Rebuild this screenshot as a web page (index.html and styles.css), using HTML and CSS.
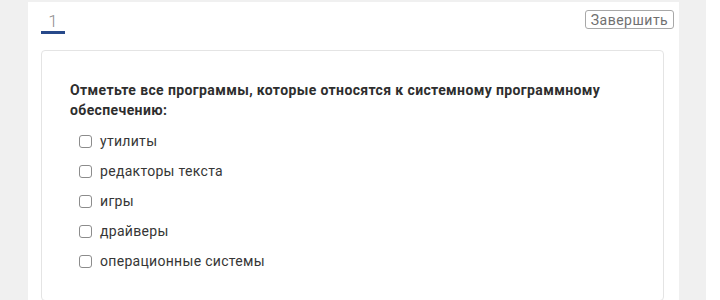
FILE: index.html
```html
<!DOCTYPE html>
<html lang="ru">
<head>
    <meta charset="UTF-8">
    <meta name="viewport" content="width=device-width, initial-scale=1.0">
    <title>Тест</title>
    <link rel="stylesheet" href="styles.css">
</head>
<body>
<div class="screen">
    <div class="main">
        <div class="sheet">
            <div class="top">
                <span class="tab active">1</span>
                <button class="finish" type="button">Завершить</button>
            </div>

            <div class="card">
                <div class="question">Отметьте все программы, которые относятся к системному программному обеспечению:</div>
                <ul class="answers">
                    <li><label><input class="box" type="checkbox"> утилиты</label></li>
                    <li><label><input class="box" type="checkbox"> редакторы текста</label></li>
                    <li><label><input class="box" type="checkbox"> игры</label></li>
                    <li><label><input class="box" type="checkbox"> драйверы</label></li>
                    <li><label><input class="box" type="checkbox"> операционные системы</label></li>
                </ul>
            </div>
        </div>
    </div>
    <div class="side"></div>
</div>
</body>
</html>
```

FILE: styles.css
```css
*{
    margin: 0;
    padding: 0;
    box-sizing: border-box;
}

body{
    font-family: Roboto, "Liberation Sans", Arial, sans-serif;
    background-color: #ffffff;
    color: #333333;
}

.screen{
    display: flex;
    height: 300px;
    overflow: hidden;
}

.main{
    width: 706px;
    padding: 2px 27px 0 28px;
    background-color: #f0f0f0;
}

.side{
    flex: 1;
    background-color: #ffffff;
}

.sheet{
    background-color: #ffffff;
    height: 100%;
    padding: 0 5px 0 13px;
}

.top{
    height: 48px;
    display: flex;
    justify-content: space-between;
    align-items: flex-start;
}

.tab{
    display: inline-block;
    width: 24px;
    margin-top: 9px;
    text-align: center;
    font-size: 17px;
    font-weight: 300;
    line-height: 20px;
    color: #8f8f8f;
    border-bottom: 3px solid transparent;
}

.tab.active{
    border-bottom-color: #27498a;
}

.finish{
    margin-top: 8px;
    height: 19px;
    width: 89px;
    padding: 0;
    font-family: inherit;
    font-size: 14px;
    letter-spacing: 0.5px;
    color: #707070;
    background-color: #ffffff;
    border: 1px solid #a8a8a8;
    border-radius: 3px;
}

.card{
    margin-right: 10px;
    border: 1px solid #e4e4e4;
    border-radius: 4px;
    padding: 29px 20px 24px 28px;
}

.question{
    font-size: 14px;
    font-weight: bold;
    letter-spacing: 0.38px;
    line-height: 20px;
    color: #2e2e2e;
    margin-bottom: 6px;
}

.answers{
    list-style: none;
    margin-left: 9px;
}

.answers li{
    padding: 5px 0;
    font-size: 14px;
    letter-spacing: 0.3px;
    line-height: 20px;
    color: #363636;
}

.answers label{
    display: flex;
    align-items: center;
}

.box{
    appearance: none;
    width: 13px;
    height: 13px;
    margin-right: 8px;
    border: 1px solid #8c8c8c;
    border-radius: 3px;
    background-color: #ffffff;
}
```
